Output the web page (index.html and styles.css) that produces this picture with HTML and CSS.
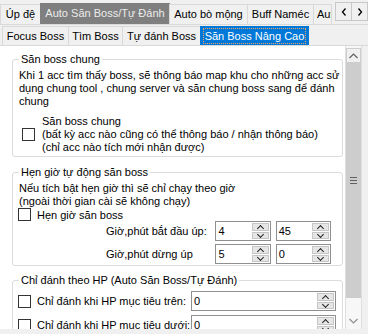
FILE: index.html
```html
<!DOCTYPE html>
<html lang="vi">
<head>
    <meta charset="UTF-8">
    <title>Săn Boss Nâng Cao</title>
    <link rel="stylesheet" href="styles.css">
</head>
<body>

    <div class="tabs outer-tabs">
        <div class="tab" style="width:41px">Úp đệ</div>
        <div class="tab selected-gray" style="width:130px">Auto Săn Boss/Tự Đánh</div>
        <div class="tab" style="width:79px">Auto bò mộng</div>
        <div class="tab" style="width:67px">Buff Naméc</div>
        <div class="tab clipped" style="width:19px">Auto</div>
        <div class="tab-scroll">
            <div class="scroll-btn">
                <svg width="6" height="8" viewBox="0 0 6 8"><polyline points="4.5,0.5 1.5,4 4.5,7.5" fill="none" stroke="#000" stroke-width="1.3"/></svg>
            </div>
            <div class="scroll-btn">
                <svg width="6" height="8" viewBox="0 0 6 8"><polyline points="1.5,0.5 4.5,4 1.5,7.5" fill="none" stroke="#000" stroke-width="1.3"/></svg>
            </div>
        </div>
    </div>

    <div class="outer-page">
        <div class="tabs inner-tabs">
            <div class="tab" style="width:67px">Focus Boss</div>
            <div class="tab" style="width:55px">Tìm Boss</div>
            <div class="tab" style="width:79px">Tự đánh Boss</div>
            <div class="tab selected-blue" style="width:109px"><span class="focus">Săn Boss Nâng Cao</span></div>
        </div>

        <div class="inner-page">
            <div class="panel">
                <div class="panel-content">

                    <fieldset class="group">
                        <legend>Săn boss chung</legend>
                        <div class="lines">
                            Khi 1 acc tìm thấy boss, sẽ thông báo map khu cho những acc sử<br>
                            dụng chung tool , chung server và săn chung boss sang để đánh<br>
                            chung
                        </div>
                        <div class="check-row multi">
                            <span class="checkbox"></span>
                            <div class="lines">
                                Săn boss chung<br>
                                (bất kỳ acc nào cũng có thể thông báo / nhận thông báo)<br>
                                (chỉ acc nào tích mới nhận được)
                            </div>
                        </div>
                    </fieldset>

                    <fieldset class="group timer">
                        <legend>Hẹn giờ tự động săn boss</legend>
                        <div class="lines">
                            Nếu tích bật hẹn giờ thì sẽ chỉ chạy theo giờ<br>
                            (ngoài thời gian cài sẽ không chạy)
                        </div>
                        <div class="check-row small">
                            <span class="checkbox"></span>
                            <span>Hẹn giờ săn boss</span>
                        </div>
                        <div class="time-row">
                            <span class="time-label">Giờ,phút bắt đầu úp:</span>
                            <div class="spin"><span class="spin-value">4</span><div class="spin-btns"><span class="up"></span><span class="down"></span></div></div>
                            <div class="spin"><span class="spin-value">45</span><div class="spin-btns"><span class="up"></span><span class="down"></span></div></div>
                        </div>
                        <div class="time-row second">
                            <span class="time-label">Giờ,phút dừng úp</span>
                            <div class="spin"><span class="spin-value">5</span><div class="spin-btns"><span class="up"></span><span class="down"></span></div></div>
                            <div class="spin"><span class="spin-value">0</span><div class="spin-btns"><span class="up"></span><span class="down"></span></div></div>
                        </div>
                    </fieldset>

                    <fieldset class="group hp">
                        <legend>Chỉ đánh theo HP (Auto Săn Boss/Tự Đánh)</legend>
                        <div class="hp-row">
                            <span class="checkbox"></span>
                            <span class="hp-label">Chỉ đánh khi HP mục tiêu trên:</span>
                            <div class="spin wide"><span class="spin-value">0</span><div class="spin-btns"><span class="up"></span><span class="down"></span></div></div>
                        </div>
                        <div class="hp-row">
                            <span class="checkbox"></span>
                            <span class="hp-label">Chỉ đánh khi HP mục tiêu dưới:</span>
                            <div class="spin wide"><span class="spin-value">0</span><div class="spin-btns"><span class="up"></span><span class="down"></span></div></div>
                        </div>
                    </fieldset>

                </div>

                <div class="vscroll">
                    <div class="vs-btn vs-up">
                        <svg width="9" height="6" viewBox="0 0 9 6"><polyline points="0.5,5 4.5,1 8.5,5" fill="none" stroke="#606060" stroke-width="1.2"/></svg>
                    </div>
                    <div class="vs-thumb"><span class="grip"></span></div>
                    <div class="vs-track"></div>
                    <div class="vs-btn vs-down">
                        <svg width="9" height="6" viewBox="0 0 9 6"><polyline points="0.5,1 4.5,5 8.5,1" fill="none" stroke="#909090" stroke-width="1.2"/></svg>
                    </div>
                </div>
            </div>
        </div>
    </div>

</body>
</html>
```

FILE: styles.css
```css
body {
    margin: 0;
    width: 368px;
    height: 334px;
    overflow: hidden;
    background-color: #f0f0f0;
    font-family: 'Liberation Sans', Arial, sans-serif;
    font-size: 11px;
    color: #000;
}

/* tab strips */

.tabs {
    display: flex;
    align-items: flex-end;
    white-space: nowrap;
}

.outer-tabs {
    height: 24px;
}

.tab {
    box-sizing: border-box;
    height: 20px;
    line-height: 19px;
    text-align: center;
    border: 1px solid #d9d9d9;
    border-bottom: none;
    margin-right: -1px;
    background-color: #f0f0f0;
    overflow: hidden;
}

.tab.clipped {
    text-align: left;
    padding-left: 3px;
}

.selected-gray {
    height: 21px;
    background-color: #7f7f7f;
    border-color: #7f7f7f;
    color: #ececec;
}

.tab-scroll {
    display: flex;
    align-self: flex-start;
    margin-top: 2px;
    margin-left: auto;
}

.scroll-btn {
    box-sizing: border-box;
    width: 17px;
    height: 19px;
    border: 1px solid #c8c8c8;
    margin-left: -1px;
    background-color: #f0f0f0;
    display: flex;
    align-items: center;
    justify-content: center;
}

.outer-page {
    border-top: 1px solid #d9d9d9;
}

.inner-tabs {
    padding-left: 2px;
    padding-top: 1px;
}

.inner-tabs .tab {
    height: 19px;
    line-height: 18px;
}

.selected-blue {
    background-color: #0078d7;
    border-color: #0078d7;
    color: #fff;
}

.focus {
    display: block;
    margin: 1px 2px;
    line-height: 14px;
    border: 1px dotted #f7a35c;
}

/* page with scroll panel */

.inner-page {
    display: flex;
    border-top: 1px solid #d9d9d9;
}

.panel {
    display: flex;
    width: 362px;
    height: 283px;
    background-color: #fff;
}

.panel-content {
    flex: 1;
    overflow: hidden;
}

.group {
    margin: 7px 2px 0 12px;
    padding: 3px 6px 2px 6px;
    border: 1px solid #dcdcdc;
    border-radius: 3px;
    min-inline-size: 0;
}

.group legend {
    padding: 0 2px;
    line-height: 13px;
}

.group.timer {
    margin-top: 9px;
    padding-bottom: 1px;
}

.group.hp {
    margin-top: 8px;
}

.lines {
    line-height: 13px;
    white-space: nowrap;
}

.check-row {
    display: flex;
    align-items: center;
    white-space: nowrap;
}

.check-row.multi {
    margin-top: 7px;
}

.check-row.multi .checkbox {
    margin: 0 7px 0 3px;
}

.check-row.small {
    height: 13px;
}

.checkbox {
    box-sizing: border-box;
    flex: none;
    width: 13px;
    height: 13px;
    border: 1px solid #333;
    background-color: #fff;
}

.check-row.small .checkbox,
.hp-row .checkbox {
    margin: 0 6px 0 -1px;
}

.time-row {
    display: flex;
    align-items: center;
}

.time-row.second {
    margin-top: 3px;
}

.time-label {
    width: 113px;
    margin-left: 87px;
    white-space: nowrap;
}

.spin {
    box-sizing: border-box;
    display: flex;
    width: 57px;
    height: 20px;
    border: 1px solid #8f8f8f;
    background-color: #fff;
    margin-right: 5px;
}

.spin.wide {
    width: 145px;
    margin-left: auto;
    margin-right: 0;
}

.spin-value {
    flex: 1;
    padding-left: 2px;
    line-height: 18px;
}

.spin-btns {
    display: flex;
    flex-direction: column;
    width: 17px;
    padding: 1px 1px 1px 0;
}

.spin-btns span {
    flex: 1;
    position: relative;
    margin-bottom: 1px;
    background-color: #e6e6e6;
    border: 1px solid #c6c6c6;
}

.spin-btns span:last-child {
    margin-bottom: 0;
}

.spin-btns .up::after,
.spin-btns .down::after {
    content: "";
    position: absolute;
    left: 5px;
    width: 4px;
    height: 4px;
    border-left: 1px solid #222;
    border-top: 1px solid #222;
}

.spin-btns .up::after {
    top: 2px;
    transform: rotate(45deg);
}

.spin-btns .down::after {
    top: -1px;
    transform: rotate(225deg);
}

.hp-row {
    display: flex;
    align-items: center;
    margin-top: 1px;
    white-space: nowrap;
}

.hp-row + .hp-row {
    margin-top: 4px;
}

/* vertical scrollbar */

.vscroll {
    display: flex;
    flex-direction: column;
    box-sizing: border-box;
    width: 17px;
    height: 283px;
    border-left: 1px solid #dedede;
    border-right: 1px solid #dedede;
    background-color: #f7f7f7;
}

.vs-btn {
    display: flex;
    align-items: center;
    justify-content: center;
}

.vs-up {
    height: 13px;
    margin-top: 2px;
    border: 1px solid #cfcfcf;
    background-color: #f0f0f0;
}

.vs-thumb {
    height: 235px;
    background-color: #cdcdcd;
    display: flex;
    align-items: center;
    justify-content: center;
}

.grip {
    width: 7px;
    height: 5px;
    border-top: 1px solid #606060;
    border-bottom: 1px solid #606060;
    background: linear-gradient(#606060, #606060) center / 100% 1px no-repeat;
}

.vs-track {
    flex: 1;
}

.vs-down {
    height: 17px;
}
```
